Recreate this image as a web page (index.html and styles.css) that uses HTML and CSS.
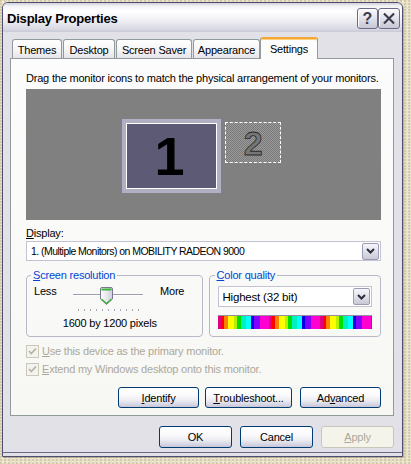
FILE: index.html
```html
<!DOCTYPE html>
<html>
<head>
<meta charset="utf-8">
<title>Display Properties</title>
<link rel="stylesheet" href="styles.css">
</head>
<body>
<div class="window">
  <div class="titlebar">
    <span class="title">Display Properties</span>
    <div class="tbtns">
      <span class="tbtn help">?</span>
      <span class="tbtn close"><svg width="21" height="21" viewBox="0 0 21 21"><path d="M6 6 L15 15 M15 6 L6 15" stroke="#3a3a4a" stroke-width="2.2" stroke-linecap="square"/></svg></span>
    </div>
  </div>
  <div class="client">
    <div class="tabs">
      <span class="tab t-themes">Themes</span>
      <span class="tab t-desktop">Desktop</span>
      <span class="tab t-saver">Screen Saver</span>
      <span class="tab t-appear">Appearance</span>
      <span class="tab active t-settings">Settings</span>
    </div>
    <div class="panel">
      <p class="hint">Drag the monitor icons to match the physical arrangement of your monitors.</p>
      <div class="canvas">
        <div class="mon1"><span>1</span></div>
        <div class="mon2"><span>2</span></div>
      </div>
      <div class="label"><u>D</u>isplay:</div>
      <div class="select display-select">
        <span class="sel-text">1. (Multiple Monitors) on MOBILITY RADEON 9000</span>
        <span class="arrow"><svg width="9" height="6" viewBox="0 0 9 6"><path d="M1 1 L4.5 4.5 L8 1" fill="none" stroke="#2c2c3c" stroke-width="2"/></svg></span>
      </div>
      <div class="groups">
        <fieldset class="group res">
          <legend><u>S</u>creen resolution</legend>
          <div class="slider-row">
            <span class="less">Less</span>
            <svg class="slider" width="80" height="28" viewBox="0 0 80 28">
              <line x1="3" y1="10.5" x2="73" y2="10.5" stroke="#9d9daf" stroke-width="1"/>
              <line x1="3" y1="11.5" x2="73" y2="11.5" stroke="#ffffff" stroke-width="1"/>
              <g stroke="#a8a8b8" stroke-width="1">
                <line x1="8.5" y1="25" x2="8.5" y2="27"/>
                <line x1="14.5" y1="25" x2="14.5" y2="27"/>
                <line x1="20.5" y1="25" x2="20.5" y2="27"/>
                <line x1="26.5" y1="25" x2="26.5" y2="27"/>
                <line x1="32.5" y1="25" x2="32.5" y2="27"/>
                <line x1="38.5" y1="25" x2="38.5" y2="27"/>
                <line x1="44.5" y1="25" x2="44.5" y2="27"/>
                <line x1="50.5" y1="25" x2="50.5" y2="27"/>
                <line x1="56.5" y1="25" x2="56.5" y2="27"/>
                <line x1="62.5" y1="25" x2="62.5" y2="27"/>
                <line x1="68.5" y1="25" x2="68.5" y2="27"/>
              </g>
              <defs>
                <linearGradient id="th" x1="0" y1="0" x2="1" y2="0">
                  <stop offset="0" stop-color="#ffffff"/>
                  <stop offset="1" stop-color="#cfcfdc"/>
                </linearGradient>
              </defs>
              <path d="M30.5 5 Q30.5 3.5 32 3.5 H41 Q42.5 3.5 42.5 5 V15 L36.5 20.5 L30.5 15 Z" fill="url(#th)" stroke="#78788e" stroke-width="1"/>
              <path d="M31.5 4.5 H41.5 V6.5 H31.5 Z" fill="#3cb43c"/>
              <path d="M31.5 15 L36.5 19.5 L41.5 15" fill="none" stroke="#3cb43c" stroke-width="1.2"/>
            </svg>
            <span class="more">More</span>
          </div>
          <div class="res-text">1600 by 1200 pixels</div>
        </fieldset>
        <fieldset class="group color">
          <legend><u>C</u>olor quality</legend>
          <div class="select color-select">
            <span class="sel-text">Highest (32 bit)</span>
            <span class="arrow"><svg width="9" height="6" viewBox="0 0 9 6"><path d="M1 1 L4.5 4.5 L8 1" fill="none" stroke="#2c2c3c" stroke-width="2"/></svg></span>
          </div>
          <div class="rainbow"></div>
        </fieldset>
      </div>
      <div class="checks">
        <div class="check"><span class="box"><svg width="11" height="11" viewBox="0 0 11 11"><path d="M2 5 L4.3 7.5 L9 2.5" fill="none" stroke="#b6b4a6" stroke-width="1.8"/></svg></span><span><u>U</u>se this device as the primary monitor.</span></div>
        <div class="check"><span class="box"><svg width="11" height="11" viewBox="0 0 11 11"><path d="M2 5 L4.3 7.5 L9 2.5" fill="none" stroke="#b6b4a6" stroke-width="1.8"/></svg></span><span><u>E</u>xtend my Windows desktop onto this monitor.</span></div>
      </div>
      <div class="btnrow">
        <span class="btn b-identify"><u>I</u>dentify</span>
        <span class="btn b-trouble"><u>T</u>roubleshoot...</span>
        <span class="btn b-adv">Ad<u>v</u>anced</span>
      </div>
    </div>
    <div class="footer">
      <span class="btn b-foot">OK</span>
      <span class="btn b-foot">Cancel</span>
      <span class="btn b-foot disabled"><u>A</u>pply</span>
    </div>
  </div>
</div>
</body>
</html>
```
FILE: styles.css
```css
html, body {
  margin: 0;
  padding: 0;
}
body {
  width: 411px;
  height: 464px;
  overflow: hidden;
  background-color: #e7e0c6;
  background-image:
    radial-gradient(circle at 1px 1px, rgba(150,135,90,0.25) 1px, transparent 1px),
    radial-gradient(circle at 3px 2px, rgba(255,255,240,0.4) 1px, transparent 1px);
  background-size: 4px 3px, 5px 4px;
  font-family: "Liberation Sans", Arial, sans-serif;
  font-size: 11px;
  letter-spacing: -0.2px;
  color: #000;
  padding: 2px 0 0 2px;
  box-sizing: border-box;
}
.window {
  width: 401px;
  height: 455px;
  box-sizing: border-box;
  border: 1px solid #4e4e70;
  border-radius: 6px 6px 0 0;
  background: #e3e1e8;
  box-shadow: inset 0 -3px 0 #e3e1e8, inset 0 -4px 0 #6a6a88, 1px 1px 0 rgba(90,80,60,0.35);
  display: flex;
  flex-direction: column;
  overflow: hidden;
}
.titlebar {
  height: 29px;
  flex: none;
  display: flex;
  align-items: center;
  justify-content: space-between;
  padding: 0 2px 0 4px;
  background: linear-gradient(#cfcfdc 0, #f2f2f6 3px, #ffffff 8px, #f6f6f9 14px, #e8e8ef 20px, #dadae4 26px, #c9c9d6 29px);
}
.title {
  font-weight: bold;
  font-size: 13px;
  color: #000;
  letter-spacing: -0.2px;
  padding-top: 2px;
}
.tbtns {
  display: flex;
  padding-top: 2px;
}
.tbtn {
  width: 21px;
  height: 21px;
  box-sizing: border-box;
  border: 1px solid #6a6a86;
  border-radius: 3px;
  background: linear-gradient(#fbfbfd, #e4e4ec 45%, #c7c7d6 100%);
  box-shadow: inset 1px 1px 0 #ffffff;
  display: flex;
  align-items: center;
  justify-content: center;
  color: #3a3a4a;
  font-weight: bold;
  font-size: 16px;
  letter-spacing: 0;
}
.tbtn.close {
  width: 22px;
}
.tbtn svg {
  display: block;
}
.client {
  flex: 1;
  padding: 5px 8px 0 7px;
  display: flex;
  flex-direction: column;
}
.tabs {
  height: 21px;
  display: flex;
  align-items: flex-end;
  padding-left: 2px;
  position: relative;
  z-index: 1;
}
.tab {
  height: 19px;
  box-sizing: border-box;
  border: 1px solid #919b9c;
  border-bottom: none;
  border-radius: 3px 3px 0 0;
  background: linear-gradient(#ffffff, #f4f4f6 60%, #e4e4ea);
  display: flex;
  align-items: center;
  justify-content: center;
  margin-right: 1px;
  padding-top: 1px;
}
.t-themes { width: 50px; }
.t-desktop { width: 52px; }
.t-saver { width: 76px; }
.t-appear { width: 67px; }
.t-settings { width: 58px; }
.tab.active {
  height: 22px;
  margin-bottom: -1px;
  background: #fcfcfc;
  border-top: 2px solid #f4a83a;
  box-shadow: inset 0 1px 0 #ffd27a;
  padding-top: 0;
  margin-left: -1px;
}
.panel {
  height: 358px;
  box-sizing: border-box;
  border: 1px solid #919b9c;
  background: linear-gradient(#fcfcfc, #f7f7f4);
  padding: 13px 12px 7px 15px;
  display: flex;
  flex-direction: column;
}
.hint {
  margin: 0;
  height: 13px;
  line-height: 13px;
  white-space: nowrap;
}
.canvas {
  margin-top: 4px;
  height: 131px;
  background: #808080;
  position: relative;
  flex: none;
}
.mon1 {
  position: absolute;
  left: 96px;
  top: 30px;
  width: 99px;
  height: 74px;
  box-sizing: border-box;
  background: #b1afc4;
  padding: 4px;
}
.mon1 span {
  display: flex;
  height: 100%;
  box-sizing: border-box;
  border: 1px solid #ffffff;
  background: #5c5a74;
  align-items: center;
  justify-content: center;
  font-weight: bold;
  font-size: 54px;
  line-height: 1;
  color: #000;
  padding-right: 4px;
}
.mon2 {
  position: absolute;
  left: 199px;
  top: 33px;
  width: 56px;
  height: 41px;
  box-sizing: border-box;
  border: 1px dashed #ffffff;
  background-color: #8a8a8a;
  background-image: repeating-conic-gradient(#7a7a7a 0 25%, #9a9a9a 0 50%);
  background-size: 2px 2px;
  display: flex;
  align-items: center;
  justify-content: center;
}
.mon2 span {
  font-weight: bold;
  font-size: 34px;
  line-height: 1;
  color: #767676;
  -webkit-text-stroke: 0.8px #2a2a2a;
}
.label {
  margin-top: 7px;
  height: 13px;
  line-height: 13px;
}
.select {
  height: 21px;
  box-sizing: border-box;
  border: 1px solid #c3c3d3;
  background: #ffffff;
  display: flex;
  align-items: center;
  justify-content: space-between;
  padding: 0 1px 0 4px;
}
.display-select {
  margin-top: 1px;
}
.display-select .sel-text {
  font-size: 10.5px;
  letter-spacing: -0.55px;
}
.sel-text {
  white-space: nowrap;
}
.arrow {
  width: 17px;
  height: 17px;
  box-sizing: border-box;
  border: 1px solid #9c9cb4;
  border-radius: 2px;
  background: linear-gradient(#f6f6fa, #dcdce6 60%, #c8c8d6);
  display: flex;
  align-items: center;
  justify-content: center;
}
.arrow svg {
  display: block;
}
.groups {
  margin-top: 8px;
  display: flex;
  gap: 6px;
}
.group {
  margin: 0;
  min-width: 0;
  box-sizing: border-box;
  border: 1px solid #b8b8c8;
  border-radius: 4px;
  padding: 0 8px 5px 7px;
}
.group legend {
  padding: 0 2px;
  margin-left: -3px;
  color: #0046d5;
  line-height: 13px;
}
.res {
  width: 177px;
  padding-right: 16px;
}
.color {
  width: 173px;
  padding: 0 8px 7px 8px;
}
.slider-row {
  margin-top: 2px;
  height: 28px;
  display: flex;
  align-items: flex-start;
}
.less {
  width: 36px;
  line-height: 13px;
  margin-top: 1px;
}
.slider {
  display: block;
}
.more {
  margin-left: 10px;
  line-height: 13px;
  margin-top: 1px;
}
.res-text {
  margin-top: 5px;
  line-height: 13px;
  text-align: center;
}
.color-select {
  margin-top: 4px;
  font-size: 11.5px;
}
.rainbow {
  margin-top: 8px;
  height: 14px;
  border-top: 1px solid #9090a0;
  box-sizing: border-box;
  background: repeating-linear-gradient(90deg,
    #e0007f 0 3px, #ff0000 3px 6px, #ff8000 6px 10px, #ffff00 10px 16px,
    #b8f000 16px 19px, #00e000 19px 23px, #00f0c0 23px 28px, #00ffff 28px 33px,
    #0000e0 33px 36px, #8000ff 36px 42px, #ff00d0 42px 51px);
}
.checks {
  margin-top: 8px;
  color: #aca899;
}
.check {
  height: 18px;
  display: flex;
  align-items: flex-start;
}
.box {
  width: 13px;
  height: 13px;
  box-sizing: border-box;
  border: 1px solid #cac8bb;
  background: #f4f3ee;
  display: flex;
  align-items: center;
  justify-content: center;
  margin-right: 3px;
  flex: none;
}
.box svg {
  display: block;
}
.check span:last-child {
  line-height: 13px;
}
.btnrow {
  margin-top: 6px;
  display: flex;
  justify-content: flex-end;
}
.btn {
  height: 21px;
  box-sizing: border-box;
  border: 1px solid #003c74;
  border-radius: 3px;
  background: linear-gradient(#ffffff 0, #fafafc 40%, #ececf2 65%, #d8d8e6 85%, #c6c6d8 100%);
  display: flex;
  align-items: center;
  justify-content: center;
  color: #000;
}
.b-identify { width: 81px; }
.b-trouble { width: 87px; margin-left: 6px; }
.b-adv { width: 81px; margin-left: 8px; }
.footer {
  margin-top: 10px;
  display: flex;
  justify-content: flex-end;
  gap: 8px;
}
.b-foot {
  width: 73px;
  height: 22px;
}
.btn.disabled {
  border-color: #c9c7ba;
  background: #f5f4ea;
  color: #aca899;
}
```
